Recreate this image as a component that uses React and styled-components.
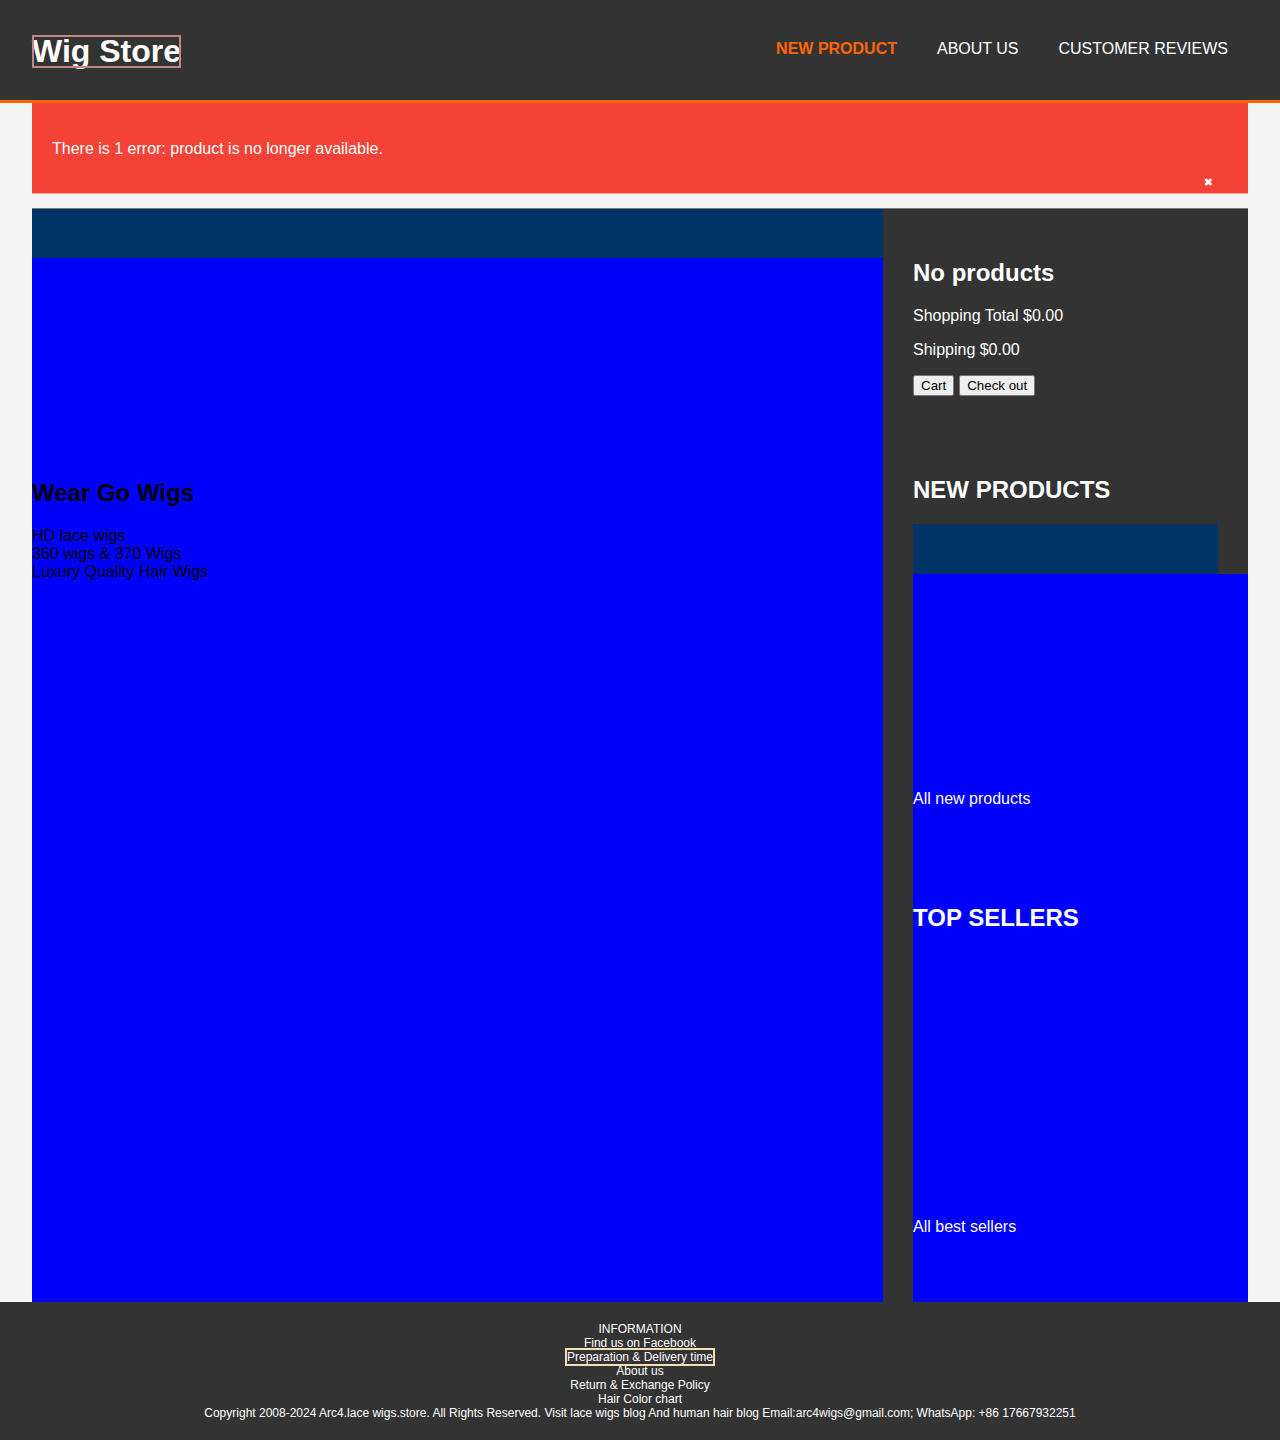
import React from 'react';
import styled, { createGlobalStyle } from 'styled-components';

const Global = createGlobalStyle`
  body {
    margin: 0;
    background: #f4f4f4;
    font-family: "Liberation Sans", Arial, sans-serif;
  }
`;

const Header = styled.header`
  height: 100px;
  background: #333;
  border-bottom: 3px solid #ff6600;
  display: flex;
  align-items: center;
  justify-content: space-between;
  padding: 0 32px;
`;

const Logo = styled.a`
  color: #fff;
  font-size: 32px;
  font-weight: bold;
  line-height: 33px;
  outline: 2px solid #c4858a;
  outline-offset: -2px;
  margin-top: 3px;
`;

const Nav = styled.nav`
  display: flex;
  margin-top: -2px;
`;

const NavLink = styled.a`
  padding: 0 20px;
  font-size: 16px;
  color: ${(p) => (p.$active ? '#ff6600' : '#fff')};
  font-weight: ${(p) => (p.$active ? 'bold' : 'normal')};
  text-transform: uppercase;
`;

const Wrap = styled.div`
  margin: 0 32px;
`;

const Alert = styled.div`
  height: 91px;
  box-sizing: border-box;
  background: #f44336;
  border-bottom: 1px solid #f8a29c;
  color: #fff;
  padding: 0 20px;
  margin-bottom: 14px;
  position: relative;
`;

const AlertText = styled.p`
  margin: 0;
  padding-top: 37px;
  font-size: 16px;
  line-height: 18px;
`;

const Close = styled.span`
  position: absolute;
  right: 35px;
  top: 73px;
  font-family: "DejaVu Sans", sans-serif;
  font-size: 11px;
  font-weight: bold;
`;

const Main = styled.div`
  display: grid;
  grid-template-columns: 851px 365px;
  height: 1094px;
  box-sizing: border-box;
  border-top: 1px solid #7a7a7a;
  overflow: hidden;
`;

const Hero = styled.section`
  display: flex;
  flex-direction: column;
`;

const Band = styled.div`
  height: ${(p) => p.$h}px;
  background: #003366;
  flex-shrink: 0;
`;

const HeroBody = styled.div`
  flex: 1;
  background: #0000ff;
  padding-top: 221px;
  color: #000;
`;

const HeroTitle = styled.h2`
  font-size: 24px;
  margin: 0 0 20px;
  line-height: 28px;
`;

const HeroLine = styled.div`
  font-size: 16px;
  line-height: 18px;
`;

const Side = styled.aside`
  background: #333;
  color: #fff;
  padding: 30px 30px 0;
  overflow: hidden;
`;

const SideTitle = styled.h2`
  font-size: 24px;
  line-height: 28px;
  margin: 20px 0;
  text-transform: ${(p) => (p.$upper ? 'uppercase' : 'none')};
`;

const SideText = styled.p`
  font-size: 16px;
  line-height: 18px;
  margin: 16px 0;
`;

const Buttons = styled.div`
  display: flex;
  gap: 5px;
  margin-bottom: 80px;
`;

const Btn = styled.button`
  font-family: "Liberation Sans", Arial, sans-serif;
  font-size: 13.33px;
  color: #000;
  background: #efefef;
  border: 1px solid #767676;
  border-radius: 2px;
  padding: 1px 7px;
  height: 21px;
`;

const BlueArea = styled.div`
  width: 335px;
  height: 800px;
  background: #0000ff;
`;

const Spacer = styled.div`
  height: ${(p) => p.$h}px;
`;

const SideLink = styled.a`
  display: block;
  color: #fff;
  font-size: 16px;
  line-height: 18px;
`;

const BlueTitle = styled.h2`
  font-size: 24px;
  line-height: 28px;
  margin: 96px 0 0;
  color: #fff;
`;

const Footer = styled.footer`
  background: #333;
  color: #fff;
  height: 138px;
  box-sizing: border-box;
  padding-top: 20px;
  text-align: center;
  font-size: 12px;
  line-height: 14px;
`;

const FootLink = styled.div`
  & > span {
    outline: ${(p) => (p.$focus ? '2px solid #f5deb3' : 'none')};
  }
`;

const links = [
  'INFORMATION',
  'Find us on Facebook',
  'Preparation & Delivery time',
  'About us',
  'Return & Exchange Policy',
  'Hair Color chart',
];

export default function App() {
  return (
    <>
      <Global />
      <Header>
        <Logo>Wig Store</Logo>
        <Nav>
          <NavLink $active>New Product</NavLink>
          <NavLink>About us</NavLink>
          <NavLink>Customer Reviews</NavLink>
        </Nav>
      </Header>
      <Wrap>
        <Alert>
          <AlertText>There is 1 error: product is no longer available.</AlertText>
          <Close>✖</Close>
        </Alert>
        <Main>
          <Hero>
            <Band $h={49} />
            <HeroBody>
              <HeroTitle>Wear Go Wigs</HeroTitle>
              <HeroLine>HD lace wigs</HeroLine>
              <HeroLine>360 wigs &amp; 370 Wigs</HeroLine>
              <HeroLine>Luxury Quality Hair Wigs</HeroLine>
            </HeroBody>
          </Hero>
          <Side>
            <SideTitle>No products</SideTitle>
            <SideText>Shopping Total $0.00</SideText>
            <SideText>Shipping $0.00</SideText>
            <Buttons>
              <Btn>Cart</Btn>
              <Btn>Check out</Btn>
            </Buttons>
            <SideTitle $upper>New products</SideTitle>
            <Band $h={50} />
            <BlueArea>
              <Spacer $h={216} />
              <SideLink>All new products</SideLink>
              <BlueTitle>TOP SELLERS</BlueTitle>
              <Spacer $h={286} />
              <SideLink>All best sellers</SideLink>
            </BlueArea>
          </Side>
        </Main>
      </Wrap>
      <Footer>
        {links.map((l, i) => (
          <FootLink key={l} $focus={i === 2}>
            <span>{l}</span>
          </FootLink>
        ))}
        <div>
          Copyright 2008-2024 Arc4.lace wigs.store. All Rights Reserved. Visit lace wigs blog And human hair blog Email:arc4wigs@gmail.com; WhatsApp: +86 17667932251
        </div>
      </Footer>
    </>
  );
}
